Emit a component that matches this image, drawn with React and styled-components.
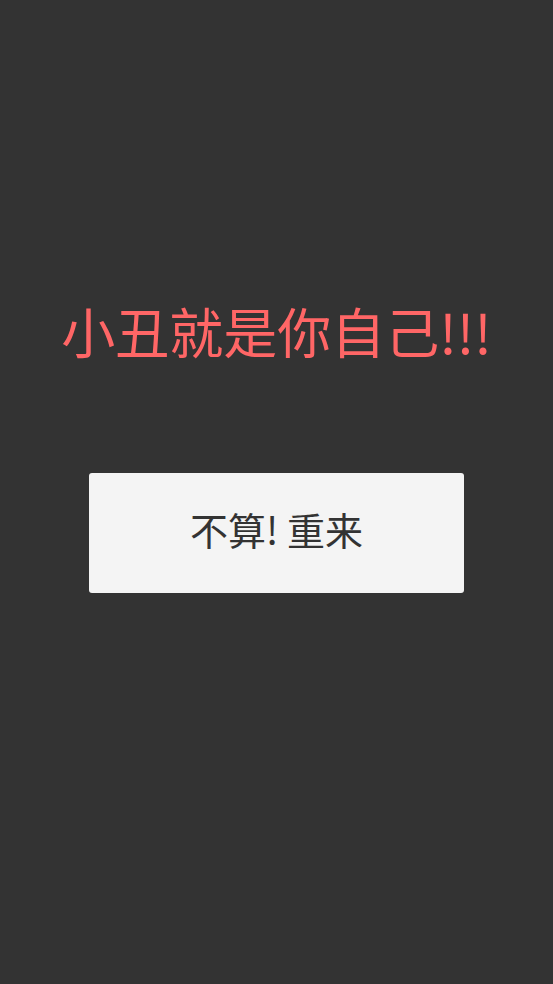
import React from "react";
import styled, { createGlobalStyle } from "styled-components";

const GlobalStyle = createGlobalStyle`
  html, body {
    margin: 0;
    padding: 0;
    background-color: #333333;
  }
  body {
    font-family: "Noto Sans CJK SC", "Noto Sans", sans-serif;
  }
`;

const Page = styled.div`
  min-height: 100vh;
  display: flex;
  flex-direction: column;
  align-items: center;
  padding-top: 298px;
  box-sizing: border-box;
  background-color: #333333;
`;

const Title = styled.h1`
  margin: 0;
  color: #ff6666;
  font-size: 54px;
  font-weight: 400;
  line-height: 66px;
  text-align: center;
`;

const RetryButton = styled.button`
  margin-top: 109px;
  width: 375px;
  height: 120px;
  padding: 0 0 10px;
  border: none;
  border-radius: 3px;
  background-color: #f4f4f4;
  color: #333333;
  font-family: "Noto Sans CJK SC", "Noto Sans", sans-serif;
  font-size: 38px;
  cursor: pointer;
`;

export default function App() {
  return (
    <>
      <GlobalStyle />
      <Page>
        <Title>小丑就是你自己!!!</Title>
        <RetryButton>不算! 重来</RetryButton>
      </Page>
    </>
  );
}
